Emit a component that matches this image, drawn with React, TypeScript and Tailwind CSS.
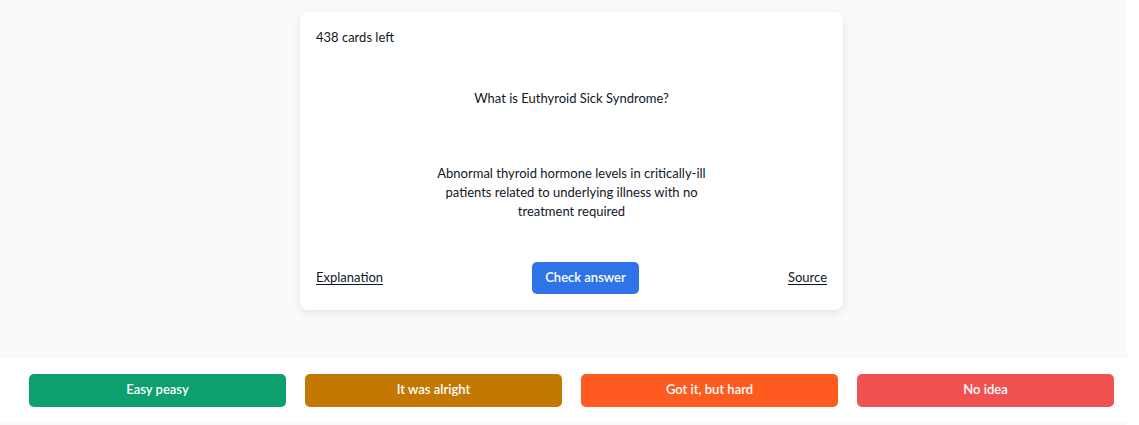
const ratings = [
  { label: "Easy peasy", color: "bg-[#0e9f6e]" },
  { label: "It was alright", color: "bg-[#c27803]" },
  { label: "Got it, but hard", color: "bg-[#ff5a1f]" },
  { label: "No idea", color: "bg-[#f05252]" },
];

function FlashCard() {
  return (
    <div className="ml-[300px] mt-3 w-[543px] rounded-lg bg-white p-4 shadow-[0_3px_10px_rgba(0,0,0,0.09)]">
      <div className="text-[13px] leading-[19px]">438 cards left</div>
      <div className="mt-[42px] text-center text-[13px] leading-[19px]">
        What is Euthyroid Sick Syndrome?
      </div>
      <div className="mx-auto mt-[56px] max-w-[280px] text-center text-[13px] leading-[19px]">
        Abnormal thyroid hormone levels in critically-ill patients related to underlying illness with no treatment required
      </div>
      <div className="mt-[41px] flex items-center justify-between text-[13px]">
        <a href="#" className="underline underline-offset-2">Explanation</a>
        <button className="h-8 rounded-[5px] bg-[#2f73e8] px-[13px] font-semibold text-white">
          Check answer
        </button>
        <a href="#" className="underline underline-offset-2">Source</a>
      </div>
    </div>
  );
}

export default function App() {
  return (
    <div className="flex h-[425px] w-full bg-white text-gray-900" style={{ fontFamily: "Lato, sans-serif" }}>
      <div className="flex w-[1127px] flex-col bg-gray-50">
        <div className="h-[358px]">
          <FlashCard />
        </div>
        <div className="grid h-16 grid-cols-4 items-center gap-[19px] bg-white pl-[29px] pr-[13px]">
          {ratings.map((r) => (
            <button
              key={r.label}
              className={`h-[33px] rounded-[5px] text-[13px] font-semibold text-white ${r.color}`}
            >
              {r.label}
            </button>
          ))}
        </div>
      </div>
      <div className="flex-1" />
    </div>
  );
}
